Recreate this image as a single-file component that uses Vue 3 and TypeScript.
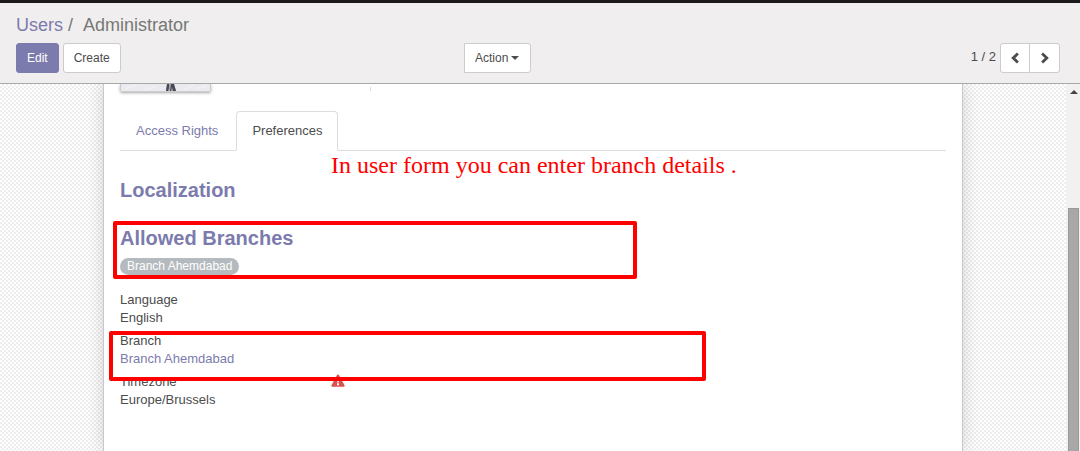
<script setup lang="ts">
import { ref } from 'vue'

interface Field {
  label: string
  value: string
  link?: boolean
  warning?: boolean
}

const tabs: string[] = ['Access Rights', 'Preferences']
const activeTab = ref<string>('Preferences')

const fields: Field[] = [
  { label: 'Language', value: 'English' },
  { label: 'Branch', value: 'Branch Ahemdabad', link: true },
  { label: 'Timezone', value: 'Europe/Brussels', warning: true },
]
</script>

<template>
  <div class="page">
    <header class="control-panel">
      <nav class="breadcrumb" aria-label="Breadcrumb">
        <a href="#">Users</a><span class="slash">/</span><span>Administrator</span>
      </nav>
      <div class="toolbar">
        <div class="left">
          <button type="button" class="btn primary">Edit</button>
          <button type="button" class="btn">Create</button>
        </div>
        <div class="right">
          <button type="button" class="btn action">Action<span class="caret"></span></button>
          <div class="pager">
            <span class="count">1 / 2</span>
            <div class="pager-buttons">
              <button type="button" class="btn" aria-label="Previous">
                <svg width="10" height="12" viewBox="0 0 10 12"><path d="M7.900 1.600 3.200 6l4.700 4.400" /></svg>
              </button>
              <button type="button" class="btn" aria-label="Next">
                <svg width="10" height="12" viewBox="0 0 10 12"><path d="M2.100 1.600 6.800 6l-4.700 4.400" /></svg>
              </button>
            </div>
          </div>
        </div>
      </div>
    </header>

    <div class="content">
      <main class="backdrop">
        <section class="sheet">
          <div class="top">
            <div class="avatar">
              <svg width="89" height="7" viewBox="0 0 89 7">
                <rect width="89" height="7" fill="#ebeaf0" />
                <path d="M4 5 16 1M22 7l14-5M64 6l9-6M74 5l12-3" stroke="#f0eff4" stroke-width="2" />
                <path d="M46 0h7l2 7H45z" fill="#a9a9b6" />
                <path d="M46 0h2v4l-1 3h-2zM50 0h3l2 7h-3l-1-4-1 4h-1z" fill="#484854" />
              </svg>
            </div>
            <span class="divider"></span>
          </div>

          <div class="tabs" role="tablist">
            <button
              v-for="tab in tabs"
              :key="tab"
              type="button"
              role="tab"
              class="tab"
              :class="{ active: tab === activeTab }"
              :aria-selected="tab === activeTab"
              @click="activeTab = tab"
            >{{ tab }}</button>
          </div>

          <h2>Localization</h2>
          <h2>Allowed Branches</h2>
          <span class="tag">Branch Ahemdabad</span>

          <dl class="fields">
            <div v-for="field in fields" :key="field.label" class="field">
              <dt>
                <span class="label">{{ field.label }}</span>
                <svg v-if="field.warning" class="warning" width="14" height="13" viewBox="0 0 14 13">
                  <path d="M7 0.5c.5 0 .8.2 1 .6l5.5 10.1c.4.8 0 1.6-.9 1.6H1.400c-.9 0-1.300-.8-.9-1.600L6 1.100c.2-.4.500-.6 1-.6z" fill="#d9534f" />
                  <path d="M6 4.500h2l-.3 4H6.300zM6 9.300h2v1.900H6z" fill="#fff" />
                </svg>
              </dt>
              <dd>
                <a v-if="field.link" href="#">{{ field.value }}</a>
                <template v-else>{{ field.value }}</template>
              </dd>
            </div>
          </dl>

          <p class="note">In user form you can enter branch details .</p>
          <div class="mark mark-allowed"></div>
          <div class="mark mark-branch"></div>
        </section>
      </main>
      <div class="scrollbar" aria-hidden="true">
        <svg width="8" height="4" viewBox="0 0 8 4"><path d="M4 0 8 4H0z" fill="#454545" /></svg>
        <div class="thumb"></div>
      </div>
    </div>
  </div>
</template>

<style>
body {
  margin: 0;
}
</style>

<style scoped>
.page {
  box-sizing: border-box;
  min-height: 100vh;
  display: flex;
  flex-direction: column;
  border-top: 3px solid #1c191c;
  font-family: "Liberation Sans", Arial, sans-serif;
  font-size: 13px;
  line-height: 18px;
  color: #4c4c4c;
}

a {
  color: #7c7bad;
  text-decoration: none;
}

.control-panel {
  background: #f0eeee;
  border-bottom: 1px solid #a8a8a8;
  padding: 10px 20px 10px 16px;
}

.breadcrumb {
  font-size: 18px;
  line-height: 24px;
  margin-bottom: 6px;
  color: #777;
}

.slash {
  padding: 0 10px 0 5px;
}

.toolbar {
  display: grid;
  grid-template-columns: 448fr 596fr;
}

.left {
  display: flex;
  gap: 4px;
}

.right,
.pager {
  display: flex;
  justify-content: space-between;
}

.btn {
  box-sizing: border-box;
  height: 30px;
  padding: 0 10px;
  border: 1px solid #ccc;
  border-radius: 3px;
  background: #fff;
  color: #4c4c4c;
  font: 12px/18px "Liberation Sans", Arial, sans-serif;
}

.btn.primary {
  background: #7c7bad;
  border-color: #7c7bad;
  color: #fff;
}

.btn.action {
  display: flex;
  align-items: center;
  gap: 3px;
  padding-right: 11px;
  border-radius: 0 3px 3px 0;
}

.caret {
  border: 4px solid transparent;
  border-top-color: #4c4c4c;
  border-bottom: 0;
}

.pager {
  gap: 4px;
}

.count {
  line-height: 28px;
}

.pager-buttons {
  display: flex;
}

.pager-buttons .btn {
  width: 30px;
  padding: 0;
  display: flex;
  align-items: center;
  justify-content: center;
}

.pager-buttons .btn:first-child {
  border-radius: 3px 0 0 3px;
}

.pager-buttons .btn:last-child {
  width: 31px;
  margin-left: -1px;
  border-radius: 0 3px 3px 0;
}

.pager-buttons path {
  fill: none;
  stroke: #4c4c4c;
  stroke-width: 2.8;
}

.content {
  flex: 1;
  display: flex;
}

.backdrop {
  flex: 1;
  display: flex;
  justify-content: center;
  overflow: hidden;
  background: repeating-conic-gradient(#ededed 0 25%, #fff 0 50%) 0 0 / 4px 4px;
}

.sheet {
  position: relative;
  box-sizing: border-box;
  width: 100%;
  max-width: 860px;
  padding: 0 16px 24px;
  background: #fff;
  border: 1px solid #c8c8d3;
  border-width: 0 1px;
  box-shadow: 0 0 16px rgba(0, 0, 0, 0.16);
}

.top {
  display: flex;
  align-items: flex-start;
  height: 27px;
}

.avatar {
  display: flex;
  border: 1px solid #ccc;
  border-top: 0;
  border-radius: 0 0 2px 2px;
  box-shadow: 0 1px 3px rgba(0, 0, 0, 0.35);
}

.divider {
  margin: 3px 0 0 159px;
  height: 4px;
  border-left: 1px solid #ddd;
}

.tabs {
  display: flex;
  border-bottom: 1px solid #ddd;
}

.tab {
  box-sizing: border-box;
  height: 40px;
  margin-bottom: -1px;
  padding: 0 15px;
  border: 1px solid transparent;
  border-radius: 4px 4px 0 0;
  background: none;
  color: #7c7bad;
  font: 13px/18px "Liberation Sans", Arial, sans-serif;
}

.tab + .tab {
  margin-left: 2px;
}

.tab.active {
  background: #fff;
  border-color: #ddd;
  border-bottom-color: #fff;
  color: #4c4c4c;
}

h2 {
  margin: 0 0 24px;
  font-size: 20px;
  line-height: 24px;
  color: #7c7bad;
}

.tabs + h2 {
  margin-top: 27px;
}

h2 + h2 {
  margin-bottom: 8px;
}

.tag {
  display: table;
  padding: 0 7px;
  border-radius: 9px;
  background: #b5babe;
  color: #fff;
  font-size: 12px;
  line-height: 17px;
}

.fields {
  display: grid;
  gap: 5px;
  margin: 16px 0 0;
}

dt {
  display: flex;
}

.label {
  width: 211px;
}

.warning {
  margin-top: 1px;
}

dd {
  margin: 0;
}

/* Annotations drawn over the form */
.note {
  position: absolute;
  top: 67px;
  left: 227px;
  margin: 0;
  font: 24px/28px "Liberation Serif", "Times New Roman", serif;
  color: #f00;
  white-space: nowrap;
}

.mark {
  position: absolute;
  box-sizing: border-box;
  border: 4px solid #f00;
  border-radius: 2px;
}

.mark-allowed {
  top: 137px;
  left: 9px;
  width: 524px;
  height: 58px;
}

.mark-branch {
  top: 247px;
  left: 5px;
  width: 597px;
  height: 50px;
}

.scrollbar {
  display: flex;
  flex-direction: column;
  align-items: center;
  gap: 114px;
  width: 14px;
  padding: 6px 0 0 1px;
  box-sizing: border-box;
  background: #f1f1f1;
}

.thumb {
  flex: 1;
  box-sizing: border-box;
  width: 11px;
  background: #a8a8a8;
  border: 1px solid #999;
  border-bottom: 0;
}
</style>
